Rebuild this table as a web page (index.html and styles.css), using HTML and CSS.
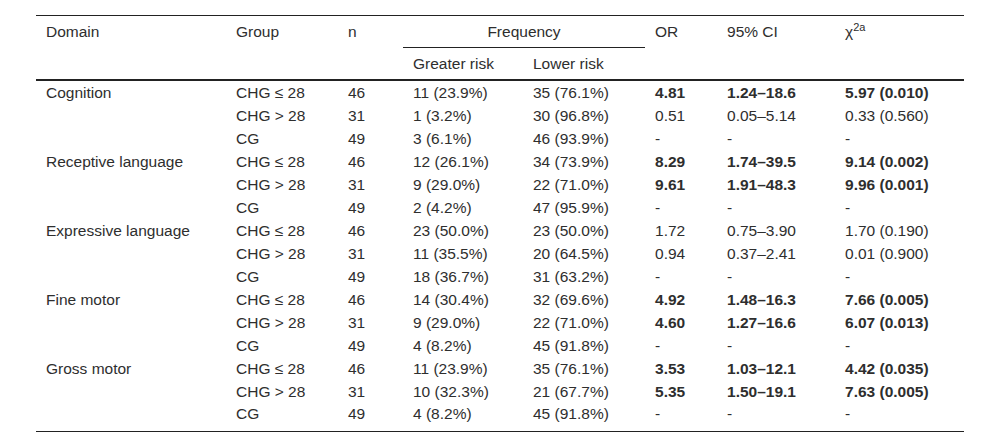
FILE: index.html
```html
<!DOCTYPE html>
<html lang="en">
<head>
<meta charset="utf-8">
<title>Table</title>
<link rel="stylesheet" href="styles.css">
</head>
<body>
<div class="wrap">
<table class="tbl">
  <colgroup>
    <col class="c-domain"><col class="c-group"><col class="c-n"><col class="c-gr"><col class="c-lr"><col class="c-or"><col class="c-ci"><col class="c-chi">
  </colgroup>
  <thead>
    <tr class="h1">
      <th>Domain</th><th>Group</th><th>n</th>
      <th colspan="2" class="freq">Frequency</th>
      <th>OR</th><th>95% CI</th><th>χ<sup>2a</sup></th>
    </tr>
    <tr class="h2">
      <th></th><th></th><th></th><th>Greater risk</th><th>Lower risk</th><th></th><th></th><th></th>
    </tr>
  </thead>
  <tbody>
    <tr class="first"><td>Cognition</td><td>CHG ≤ 28</td><td>46</td><td>11 (23.9%)</td><td>35 (76.1%)</td><td class="b">4.81</td><td class="b">1.24–18.6</td><td class="b">5.97 (0.010)</td></tr>
    <tr><td></td><td>CHG &gt; 28</td><td>31</td><td>1 (3.2%)</td><td>30 (96.8%)</td><td>0.51</td><td>0.05–5.14</td><td>0.33 (0.560)</td></tr>
    <tr><td></td><td>CG</td><td>49</td><td>3 (6.1%)</td><td>46 (93.9%)</td><td>-</td><td>-</td><td>-</td></tr>
    <tr><td>Receptive language</td><td>CHG ≤ 28</td><td>46</td><td>12 (26.1%)</td><td>34 (73.9%)</td><td class="b">8.29</td><td class="b">1.74–39.5</td><td class="b">9.14 (0.002)</td></tr>
    <tr><td></td><td>CHG &gt; 28</td><td>31</td><td>9 (29.0%)</td><td>22 (71.0%)</td><td class="b">9.61</td><td class="b">1.91–48.3</td><td class="b">9.96 (0.001)</td></tr>
    <tr><td></td><td>CG</td><td>49</td><td>2 (4.2%)</td><td>47 (95.9%)</td><td>-</td><td>-</td><td>-</td></tr>
    <tr><td>Expressive language</td><td>CHG ≤ 28</td><td>46</td><td>23 (50.0%)</td><td>23 (50.0%)</td><td>1.72</td><td>0.75–3.90</td><td>1.70 (0.190)</td></tr>
    <tr><td></td><td>CHG &gt; 28</td><td>31</td><td>11 (35.5%)</td><td>20 (64.5%)</td><td>0.94</td><td>0.37–2.41</td><td>0.01 (0.900)</td></tr>
    <tr><td></td><td>CG</td><td>49</td><td>18 (36.7%)</td><td>31 (63.2%)</td><td>-</td><td>-</td><td>-</td></tr>
    <tr><td>Fine motor</td><td>CHG ≤ 28</td><td>46</td><td>14 (30.4%)</td><td>32 (69.6%)</td><td class="b">4.92</td><td class="b">1.48–16.3</td><td class="b">7.66 (0.005)</td></tr>
    <tr><td></td><td>CHG &gt; 28</td><td>31</td><td>9 (29.0%)</td><td>22 (71.0%)</td><td class="b">4.60</td><td class="b">1.27–16.6</td><td class="b">6.07 (0.013)</td></tr>
    <tr><td></td><td>CG</td><td>49</td><td>4 (8.2%)</td><td>45 (91.8%)</td><td>-</td><td>-</td><td>-</td></tr>
    <tr><td>Gross motor</td><td>CHG ≤ 28</td><td>46</td><td>11 (23.9%)</td><td>35 (76.1%)</td><td class="b">3.53</td><td class="b">1.03–12.1</td><td class="b">4.42 (0.035)</td></tr>
    <tr><td></td><td>CHG &gt; 28</td><td>31</td><td>10 (32.3%)</td><td>21 (67.7%)</td><td class="b">5.35</td><td class="b">1.50–19.1</td><td class="b">7.63 (0.005)</td></tr>
    <tr class="last"><td></td><td>CG</td><td>49</td><td>4 (8.2%)</td><td>45 (91.8%)</td><td>-</td><td>-</td><td>-</td></tr>
  </tbody>
</table>
</div>
</body>
</html>
```

FILE: styles.css
```css
html, body {
  margin: 0;
  padding: 0;
  background: #fff;
}

.wrap {
  padding: 15px 36px 0 36px;
}

.tbl {
  width: 928px;
  table-layout: fixed;
  border-collapse: separate;
  border-spacing: 0;
  font-family: "Liberation Sans", Arial, sans-serif;
  font-size: 15.5px;
  color: #2e2e2e;
  border-top: 1px solid #222;
  border-bottom: 1px solid #222;
}

.c-domain { width: 190px; }
.c-group { width: 112px; }
.c-n { width: 65px; }
.c-gr { width: 120px; }
.c-lr { width: 122px; }
.c-or { width: 72px; }
.c-ci { width: 118px; }
.c-chi { width: 129px; }

.tbl th,
.tbl td {
  text-align: left;
  font-weight: normal;
  padding: 0 10px;
  white-space: nowrap;
  vertical-align: middle;
}

.h1 th {
  height: 31px;
  line-height: 18px;
}

.h1 .freq {
  text-align: center;
  border-bottom: 1px solid #222;
}

.h2 th {
  height: 31px;
  line-height: 18px;
  border-bottom: 2px solid #222;
}

.tbl sup {
  font-size: 11px;
  line-height: 0;
  vertical-align: 6px;
}

.tbl td {
  height: 23px;
  line-height: 18px;
}

.tbl .last td {
  height: 26px;
  vertical-align: top;
  padding-top: 2px;
}

.tbl td.b {
  font-weight: bold;
}
```
